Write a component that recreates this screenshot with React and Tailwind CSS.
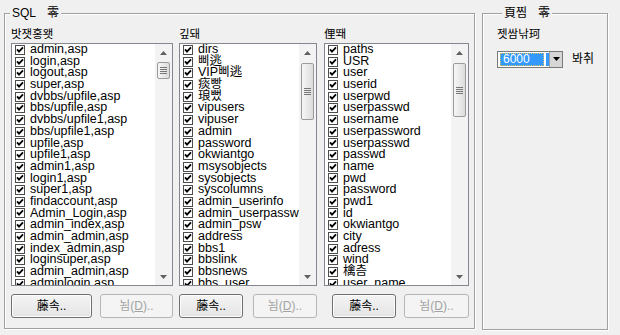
import React from "react";

const list1 = [
  "admin,asp", "login,asp", "logout,asp", "super,asp", "dvbbs/upfile,asp",
  "bbs/upfile,asp", "dvbbs/upfile1,asp", "bbs/upfile1,asp", "upfile,asp",
  "upfile1,asp", "admin1,asp", "login1,asp", "super1,asp", "findaccount,asp",
  "Admin_Login,asp", "admin_index,asp", "admin_admin,asp", "index_admin,asp",
  "loginsuper,asp", "admin_admin,asp", "adminlogin,asp",
];

const list2 = [
  "dirs", "삐逃", "VIP삐逃", "痰빵", "琅뻤", "vipusers", "vipuser", "admin",
  "password", "okwiantgo", "msysobjects", "sysobjects", "syscolumns",
  "admin_userinfo", "admin_userpassword", "admin_psw", "address", "bbs1",
  "bbslink", "bbsnews", "bbs_user",
];

const list3 = [
  "paths", "USR", "user", "userid", "userpwd", "userpasswd", "username",
  "userpassword", "userpasswd", "passwd", "name", "pwd", "password", "pwd1",
  "id", "okwiantgo", "city", "adress", "wind", "檎츰", "user_name",
];

const CheckBox = () => (
  <svg width="10" height="10" viewBox="0 0 10 10" className="shrink-0">
    <rect x="0.5" y="0.5" width="9" height="9" fill="#fff" stroke="#4d4d4d" />
    <path d="M2 4.4 L4 6.7 L8 2.4" fill="none" stroke="#000" strokeWidth="1.8" />
  </svg>
);

const Arrow = ({ up }) => (
  <svg width="7" height="4" viewBox="0 0 7 4">
    <path d={up ? "M0 4 L3.5 0 L7 4 Z" : "M0 0 L3.5 4 L7 0 Z"} fill="#606060" />
  </svg>
);

const ScrollBar = ({ thumb }) => (
  <div className="w-[17px] shrink-0 bg-[#f3f3f3] flex flex-col">
    <div className="h-[17px] flex items-center justify-center">
      <Arrow up />
    </div>
    <div className="flex-1">
      <div
        className={`${thumb} mx-[2px] rounded-[2px] border border-[#9b9b9b] bg-gradient-to-r from-[#f6f6f6] to-[#dcdcdc] flex items-center justify-center`}
      >
        <svg width="7" height="7" viewBox="0 0 7 7">
          <path d="M0 0.5 H7 M0 2.5 H7 M0 4.5 H7 M0 6.5 H7" stroke="#777" strokeWidth="1" />
        </svg>
      </div>
    </div>
    <div className="h-[17px] flex items-center justify-center">
      <Arrow />
    </div>
  </div>
);

const ListBox = ({ items, width, thumb }) => (
  <div className={`${width} h-[243px] border border-[#828790] bg-white flex`}>
    <div className="flex-1 overflow-hidden">
      {items.map((t, i) => (
        <div key={i} className="h-[11.7px] flex items-center gap-[5px] pl-[3px] whitespace-nowrap text-[12.5px] leading-[11.7px] text-black">
          <CheckBox />
          <span>{t}</span>
        </div>
      ))}
    </div>
    <ScrollBar thumb={thumb} />
  </div>
);

const Button = ({ width, disabled, children }) => (
  <div
    className={`${width} h-[24px] rounded-[3px] border flex items-center justify-center text-[12px] ${
      disabled
        ? "border-[#b5b5b5] bg-[#f4f4f4] text-[#a3a3a3]"
        : "border-[#707070] bg-gradient-to-b from-[#f4f4f4] to-[#e4e4e4] text-black shadow-[inset_0_0_0_1px_#fcfcfc]"
    }`}
  >
    {children}
  </div>
);

const Column = ({ label, items, listWidth, thumb, b1, b2, btnPad }) => (
  <div className="flex flex-col">
    <div className="h-[14px] leading-[14px] text-[11.5px] mb-[2px]">{label}</div>
    <ListBox items={items} width={listWidth} thumb={thumb} />
    <div className={`flex justify-between mt-[8px] ${btnPad}`}>
      <Button width={b1}>藤속..</Button>
      <Button width={b2} disabled>
        <span>뇜(<span className="underline">D</span>)..</span>
      </Button>
    </div>
  </div>
);

export default function App() {
  return (
    <div className="w-[620px] h-[335px] bg-[#f0f0f0] flex items-start pl-[4px] gap-[7px] text-black font-['Liberation_Sans','Noto_Sans_CJK_KR',sans-serif] overflow-hidden">
      <fieldset className="mt-[6px] w-[471px] h-[323px] border border-[#a0a0a0] shadow-[1px_1px_0_#fff,inset_1px_1px_0_#fff] pl-[6px] pr-[5px] pt-[7px] pb-[9px]">
        <legend className="ml-[-1px] px-[2px] bg-[#f0f0f0] text-[12px] leading-[14px]">
          SQL<span className="ml-[11px]">零</span>
        </legend>
        <div className="flex">
          <Column
            label="밧잿홍왯"
            items={list1}
            listWidth="w-[162px]"
            thumb="mt-[1px] h-[17px]"
            b1="w-[81px]"
            b2="w-[73px]"
            btnPad=""
          />
          <div className="w-[6px]" />
          <Column
            label="깊돼"
            items={list2}
            listWidth="w-[138px]"
            thumb="mt-[2px] h-[57px]"
            b1="w-[64px]"
            b2="w-[64px]"
            btnPad=""
          />
          <div className="w-[7px]" />
          <Column
            label="俚뙈"
            items={list3}
            listWidth="w-[145px]"
            thumb="mt-[2px] h-[54px]"
            b1="w-[64px]"
            b2="w-[65px]"
            btnPad="pl-[8px]"
          />
        </div>
      </fieldset>
      <fieldset className="mt-[6px] w-[126px] h-[324px] border border-[#a0a0a0] shadow-[1px_1px_0_#fff,inset_1px_1px_0_#fff] pl-[14px] pt-[7px]">
        <legend className="ml-[5px] px-[2px] bg-[#f0f0f0] text-[12px] leading-[14px]">
          頁찜<span className="ml-[11px]">零</span>
        </legend>
        <div className="h-[14px] leading-[14px] text-[11.5px]">젯쌈낚珂</div>
        <div className="mt-[9px] flex items-center gap-[9px]">
          <div className="w-[66px] h-[17px] border border-[#7a7a7a] bg-white flex">
            <div className="my-[1px] ml-[2px] w-[44px] bg-[#3399ff] border border-dotted border-[#d8c060] text-white text-[12px] leading-[12px] pl-[2px] flex items-center">
              6000
            </div>
            <div className="my-[1px] ml-[2px] w-[3px] bg-[#3399ff]" />
            <div className="ml-auto w-[13px] bg-[#d6d6d6] border-l border-[#a0a0a0] flex items-center justify-center">
              <svg width="7" height="4" viewBox="0 0 7 4">
                <path d="M0 0 L3.5 4 L7 0 Z" fill="#000" />
              </svg>
            </div>
          </div>
          <span className="text-[12px]">봐취</span>
        </div>
      </fieldset>
    </div>
  );
}
